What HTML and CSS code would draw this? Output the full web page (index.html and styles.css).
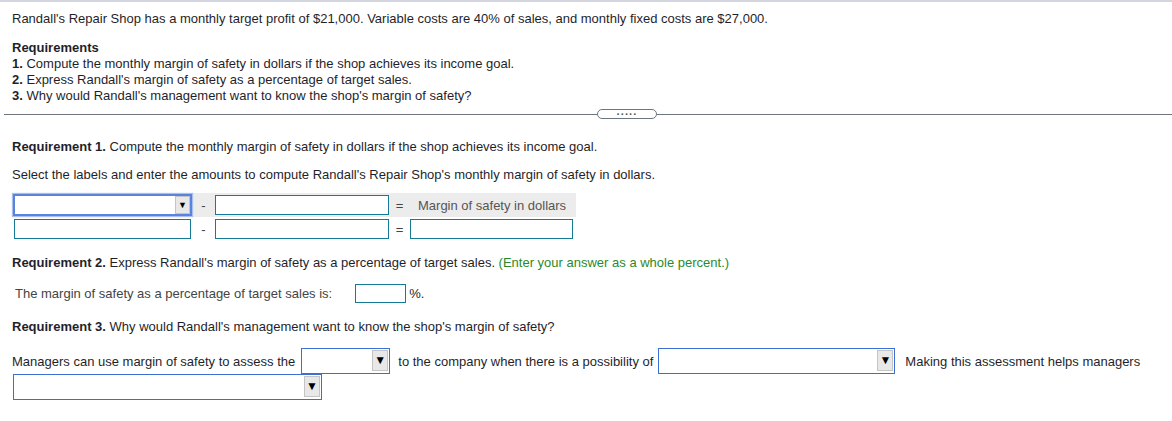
FILE: index.html
```html
<!DOCTYPE html>
<html>
<head>
<meta charset="utf-8">
<link rel="stylesheet" href="styles.css">
</head>
<body>
<div class="topbar"></div>
<div class="content">
  <p class="intro">Randall's Repair Shop has a monthly target profit of $21,000. Variable costs are 40% of sales, and monthly fixed costs are $27,000.</p>
  <div class="reqs">
    <div class="req-title">Requirements</div>
    <div><b>1.</b> Compute the monthly margin of safety in dollars if the shop achieves its income goal.</div>
    <div><b>2.</b> Express Randall's margin of safety as a percentage of target sales.</div>
    <div><b>3.</b> Why would Randall's management want to know the shop's margin of safety?</div>
  </div>
</div>
<div class="divider">
  <div class="line left"></div>
  <div class="pill"><span class="dots">·····</span></div>
  <div class="line right"></div>
</div>
<div class="content">
  <p class="q first"><b>Requirement 1.</b> Compute the monthly margin of safety in dollars if the shop achieves its income goal.</p>
  <p class="q sel">Select the labels and enter the amounts to compute Randall's Repair Shop's monthly margin of safety in dollars.</p>
  <table class="calc">
    <tr class="head">
      <td class="c1"><div class="select focus wide"><span class="arrow small-arrow">▼</span></div></td>
      <td class="op minus">-</td>
      <td class="c2"><div class="input w174"></div></td>
      <td class="op eq">=</td>
      <td class="label">Margin of safety in dollars</td>
    </tr>
    <tr>
      <td class="c1"><div class="input w177"></div></td>
      <td class="op minus">-</td>
      <td class="c2"><div class="input w174"></div></td>
      <td class="op eq">=</td>
      <td class="c3"><div class="input w163"></div></td>
    </tr>
  </table>
  <p class="q r2"><b>Requirement 2.</b> Express Randall's margin of safety as a percentage of target sales. <span class="hint">(Enter your answer as a whole percent.)</span></p>
  <div class="pct">
    <span class="pct-label">The margin of safety as a percentage of target sales is:</span>
    <div class="input small"></div>
    <span>%.</span>
  </div>
  <p class="q r3"><b>Requirement 3.</b> Why would Randall's management want to know the shop's margin of safety?</p>
  <div class="mgr">
    <span>Managers can use margin of safety to assess the</span>
    <div class="select tall s89"><span class="arrow big-arrow">▼</span></div>
    <span>to the company when there is a possibility of</span>
    <div class="select tall s237"><span class="arrow big-arrow">▼</span></div>
    <span>Making this assessment helps managers</span>
  </div>
  <div class="mgr2">
    <div class="select tall s309"><span class="arrow big-arrow">▼</span></div>
  </div>
</div>
</body>
</html>
```
FILE: styles.css
```css
html, body {
  margin: 0;
  padding: 0;
  background: #fff;
}
body {
  font-family: "Liberation Sans", Arial, sans-serif;
  font-size: 13px;
  color: #1f1f2b;
}
.topbar {
  height: 2px;
  background: #d3d6e0;
}
.content {
  padding: 0 12px;
}
.intro {
  margin: 0;
  padding-top: 9px;
  line-height: 16px;
}
.reqs {
  margin-top: 13px;
  line-height: 16px;
}
.req-title {
  font-weight: bold;
}
.divider {
  display: flex;
  align-items: center;
  margin-top: 5px;
  padding-left: 4px;
  height: 10px;
}
.line {
  height: 1px;
  background: #6b7680;
}
.line.left {
  width: 593px;
}
.line.right {
  flex: 1;
}
.pill {
  box-sizing: border-box;
  width: 60px;
  height: 10px;
  border: 1px solid #6b7680;
  border-radius: 5px;
  display: flex;
  align-items: center;
  justify-content: center;
  overflow: hidden;
}
.dots {
  font-size: 11px;
  font-weight: bold;
  line-height: 8px;
  color: #555;
  letter-spacing: 0.5px;
}
.q {
  margin: 0;
  line-height: 16px;
}
.q.first {
  margin-top: 20px;
}
.q.sel {
  margin-top: 12px;
}
.calc {
  border-collapse: collapse;
  margin-top: 10px;
}
.calc td {
  padding: 0;
  height: 24px;
  vertical-align: middle;
}
.calc tr.head td {
  background: #ececec;
  height: 24px;
}
.calc td.c1 {
  padding-left: 1px;
  width: 179px;
}
.calc td.op {
  text-align: center;
  color: #444;
}
.calc td.minus {
  width: 23px;
}
.calc td.eq {
  width: 21px;
}
.calc td.label {
  padding: 0 10px 0 8px;
  color: #555;
}
.input {
  box-sizing: border-box;
  height: 20px;
  border: 1px solid #157a96;
  background: #fff;
}
.w177 { width: 177px; margin-left: 1px; }
.w174 { width: 174px; }
.w163 { width: 163px; }
.select {
  box-sizing: border-box;
  position: relative;
  border: 1px solid #3c6fd4;
  background: #fff;
}
.arrow {
  position: absolute;
  box-sizing: border-box;
  background: #e8e8e8;
  border: 1px solid #c4c4c4;
  text-align: center;
  color: #000;
}
.select.focus {
  height: 22px;
  width: 179px;
  border: 2px solid #5b82dc;
  box-shadow: 0 0 1px 1px #a9c0ee;
}
.small-arrow {
  right: 0;
  top: 0;
  width: 15px;
  height: 18px;
  font-size: 9px;
  line-height: 16px;
}
.big-arrow {
  right: 1px;
  top: 1px;
  width: 16px;
  height: 21px;
  font-size: 12px;
  line-height: 19px;
}
.r2 {
  margin-top: 14px;
}
.hint {
  color: #2a8a2a;
}
.pct {
  display: flex;
  align-items: center;
  margin-top: 12px;
  padding-left: 3px;
  height: 20px;
}
.pct-label {
  color: #444;
  margin-right: 23px;
}
.input.small {
  width: 51px;
  height: 19px;
  margin-right: 3px;
}
.r3 {
  margin-top: 16px;
}
.mgr {
  display: flex;
  align-items: center;
  margin-top: 13px;
  white-space: nowrap;
}
.select.tall {
  height: 26px;
}
.s89 { width: 89px; margin: 0 8px 0 6px; }
.s237 { width: 237px; margin: 0 10px 0 5px; }
.mgr2 {
  padding-left: 1px;
}
.s309 {
  width: 309px;
}
```
